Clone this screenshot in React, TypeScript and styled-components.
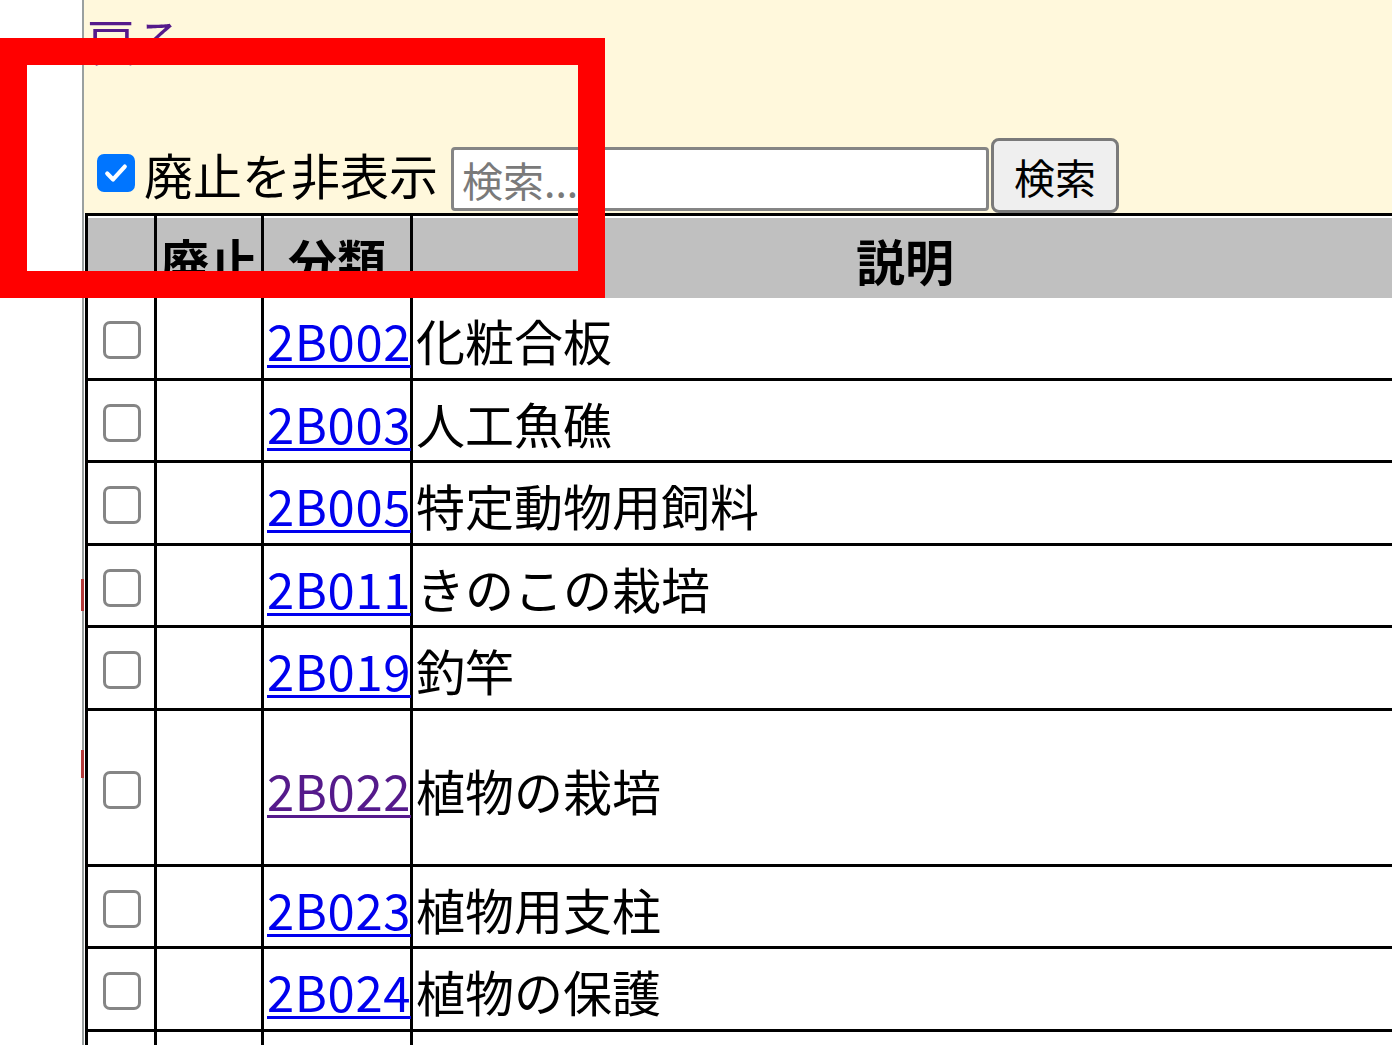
import React from 'react';
import styled, { createGlobalStyle } from 'styled-components';

const GlobalStyle = createGlobalStyle`
	html,
	body {
		margin: 0;
		padding: 0;
		background: #fff;
		overflow: hidden;
	}

	body {
		font-family: 'Noto Sans CJK JP', 'Noto Sans', sans-serif;
		color: #000;
	}
`;

const Page = styled.div`
	display: flex;
	min-height: 1045px;
	position: relative;
`;

const Gutter = styled.div`
	flex: none;
	width: 82px;
`;

const Main = styled.main`
	flex: 1;
	min-width: 0;
	border-left: 2px solid #9aa0a0;
`;

const TopBar = styled.div`
	background: #fff8dc;
	display: flex;
	flex-direction: column;
	height: 213px;
`;

const BackLink = styled.a`
	align-self: flex-start;
	color: #551a8b;
	font-size: 49px;
	padding: 4px 0 0 2px;
	text-decoration: none;
`;

const FilterRow = styled.div`
	align-items: center;
	display: flex;
	height: 75px;
	margin-top: auto;
	padding-left: 13px;
`;

const Box = styled.span<{ checked?: boolean }>`
	align-items: center;
	background: ${({ checked }) => (checked ? '#0075ff' : '#fff')};
	border: 3px solid ${({ checked }) => (checked ? '#0075ff' : '#858585')};
	border-radius: 7px;
	box-sizing: border-box;
	display: inline-flex;
	flex: none;
	height: 38px;
	justify-content: center;
	width: 38px;
`;

const FilterLabel = styled.span`
	font-size: 49px;
	margin: 0 0 5px 9px;
	white-space: nowrap;
`;

const SearchInput = styled.input`
	background: #fff;
	border: 3px solid #858585;
	border-radius: 4px;
	box-sizing: border-box;
	font-family: inherit;
	font-size: 41px;
	height: 64px;
	margin: 7px 0 0 13px;
	outline: none;
	padding: 0 8px;
	width: 538px;

	&::placeholder {
		color: #7a7a7a;
	}
`;

const SearchButton = styled.button`
	background: #efefef;
	border: 3px solid #7a7a7a;
	border-radius: 8px;
	box-sizing: border-box;
	color: #000;
	font-family: inherit;
	font-size: 41px;
	height: 75px;
	margin-left: 2px;
	padding: 0;
	width: 128px;
`;

const Grid = styled.table`
	border-collapse: separate;
	border-left: 3px solid #000;
	border-spacing: 0;
	border-top: 3px solid #000;
	font-size: 49px;
	margin-left: 1px;
	table-layout: fixed;
	width: 1315px;
`;

const HeadCell = styled.th<{ w?: number }>`
	background: #c0c0c0;
	border-right: 3px solid #000;
	box-shadow: inset 0 2px 0 #fff;
	box-sizing: border-box;
	font-weight: 700;
	height: 82px;
	padding: 4px 0 0;
	text-align: center;
	white-space: nowrap;
	width: ${({ w }) => (w ? `${w}px` : 'auto')};
`;

const Cell = styled.td<{ tall?: boolean }>`
	border-bottom: 3px solid #000;
	border-right: 3px solid #000;
	box-sizing: border-box;
	height: ${({ tall }) => (tall ? '156px' : '82.5px')};
	padding: 4px 3px 0;
	white-space: nowrap;
`;

const CheckCell = styled(Cell)`
	font-size: 0;
	padding: 5px 0 0 2px;
	text-align: center;
	vertical-align: middle;
`;

const CodeLink = styled.a<{ visited?: boolean }>`
	color: ${({ visited }) => (visited ? '#551a8b' : '#0000ee')};
	letter-spacing: 0.6px;
	text-decoration: underline;
	text-decoration-thickness: 3px;
	text-underline-offset: 4px;
`;

const Annotation = styled.div`
	border: 27px solid #ff0000;
	box-sizing: border-box;
	height: 260px;
	left: 0;
	pointer-events: none;
	position: absolute;
	top: 38px;
	width: 605px;
`;

const EdgeMark = styled.div<{ top: number; h: number }>`
	background: #b33a3a;
	height: ${({ h }) => h}px;
	left: 81px;
	position: absolute;
	top: ${({ top }) => top}px;
	width: 3px;
`;

const CheckMark = () => (
	<svg width="28" height="28" viewBox="0 0 24 24">
		<path
			d="M4.5 12.5l5 5L19.5 6.5"
			fill="none"
			stroke="#fff"
			strokeWidth="3.6"
			strokeLinecap="round"
			strokeLinejoin="round"
		/>
	</svg>
);

const CheckBox = ({ checked, className }: { checked?: boolean; className?: string }) => (
	<Box checked={checked} className={className}>
		{checked && <CheckMark />}
	</Box>
);

const FilterBox = styled(CheckBox)`
	margin-bottom: 6px;
`;

type Item = { code: string; label: string; visited?: boolean; tall?: boolean };

const items: Item[] = [
	{ code: '2B002', label: '化粧合板' },
	{ code: '2B003', label: '人工魚礁' },
	{ code: '2B005', label: '特定動物用飼料' },
	{ code: '2B011', label: 'きのこの栽培' },
	{ code: '2B019', label: '釣竿' },
	{ code: '2B022', label: '植物の栽培', visited: true, tall: true },
	{ code: '2B023', label: '植物用支柱' },
	{ code: '2B024', label: '植物の保護' },
];

const App = () => (
	<>
		<GlobalStyle />
		<Page>
			<Gutter />
			<Main>
				<TopBar>
					<BackLink href="#">戻る</BackLink>
					<FilterRow>
						<FilterBox checked />
						<FilterLabel>廃止を非表示</FilterLabel>
						<SearchInput placeholder="検索..." />
						<SearchButton>検索</SearchButton>
					</FilterRow>
				</TopBar>
				<Grid>
					<thead>
						<tr>
							<HeadCell w={69} />
							<HeadCell w={107}>廃止</HeadCell>
							<HeadCell w={149}>分類</HeadCell>
							<HeadCell>説明</HeadCell>
						</tr>
					</thead>
					<tbody>
						{items.map((item) => (
							<tr key={item.code}>
								<CheckCell tall={item.tall}>
									<CheckBox />
								</CheckCell>
								<Cell tall={item.tall} />
								<Cell tall={item.tall}>
									<CodeLink href="#" visited={item.visited}>
										{item.code}
									</CodeLink>
								</Cell>
								<Cell tall={item.tall}>{item.label}</Cell>
							</tr>
						))}
						<tr>
							<CheckCell>
								<CheckBox />
							</CheckCell>
							<Cell />
							<Cell />
							<Cell />
						</tr>
					</tbody>
				</Grid>
			</Main>
			<Annotation />
			<EdgeMark top={579} h={32} />
			<EdgeMark top={750} h={28} />
		</Page>
	</>
);

export default App;
